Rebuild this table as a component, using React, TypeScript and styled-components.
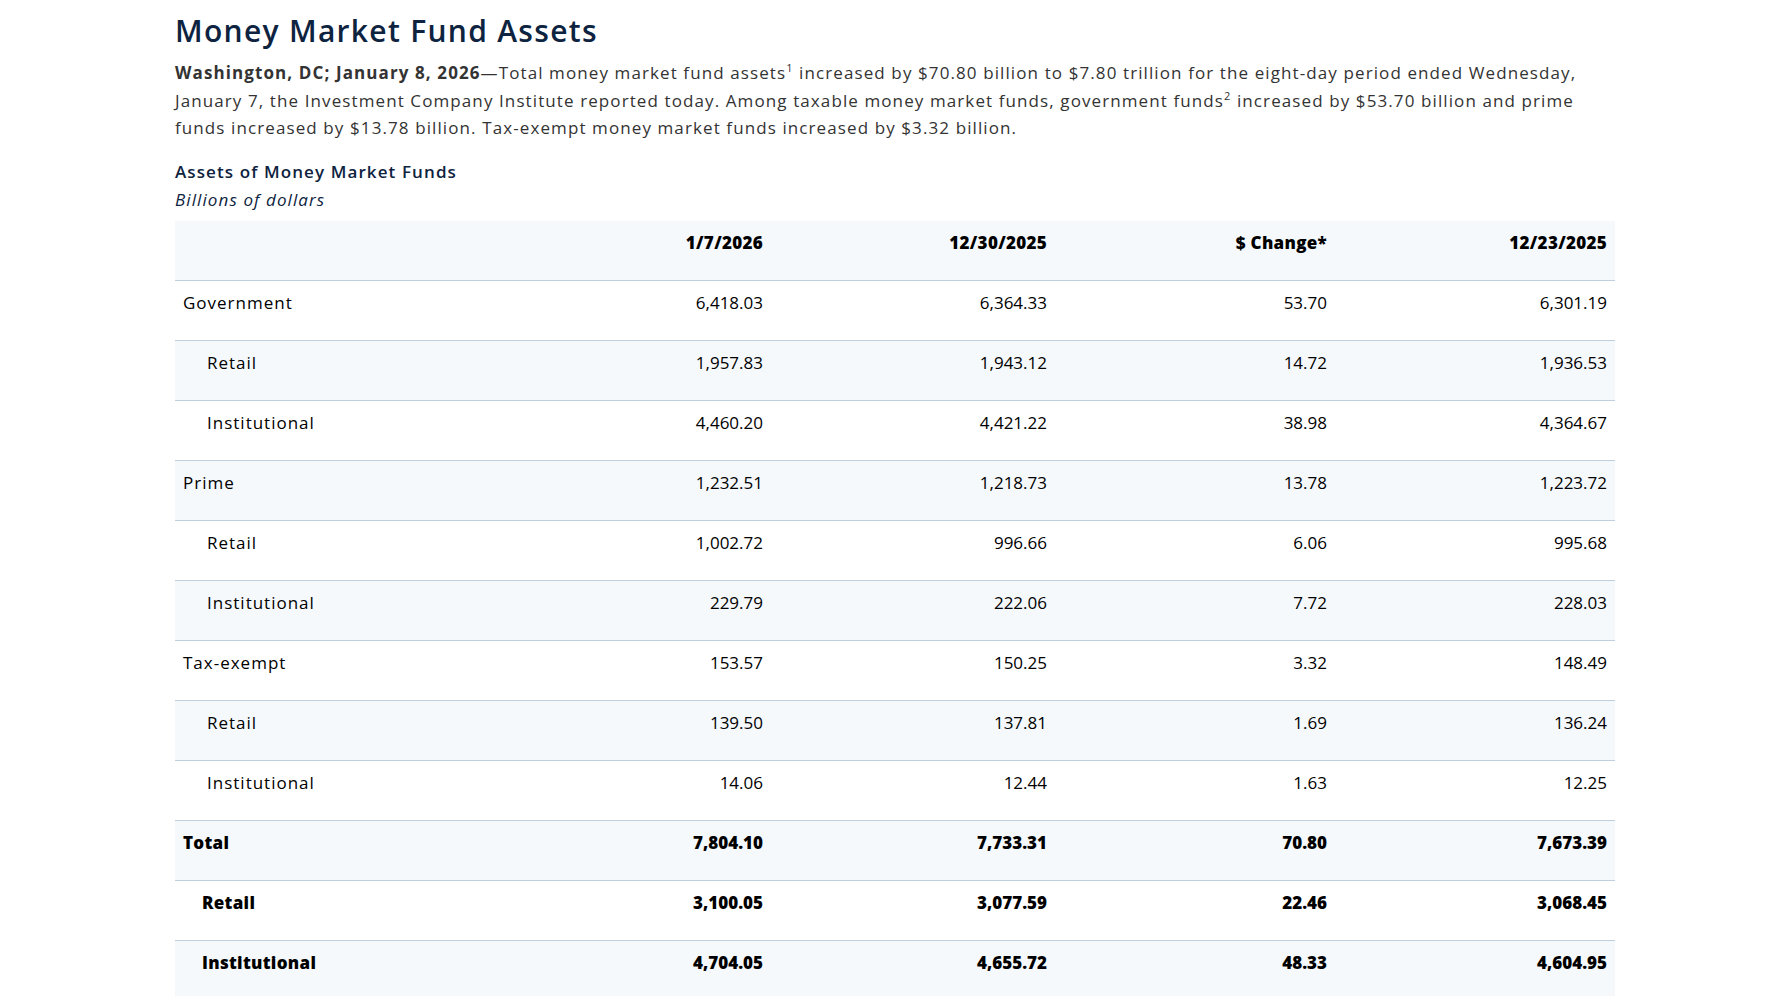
import styled, { createGlobalStyle } from 'styled-components';

interface FundRow {
  label: string;
  values: string[];
  level: 'group' | 'sub' | 'total' | 'totalSub';
}

const rows: FundRow[] = [
  { label: 'Government', values: ['6,418.03', '6,364.33', '53.70', '6,301.19'], level: 'group' },
  { label: 'Retail', values: ['1,957.83', '1,943.12', '14.72', '1,936.53'], level: 'sub' },
  { label: 'Institutional', values: ['4,460.20', '4,421.22', '38.98', '4,364.67'], level: 'sub' },
  { label: 'Prime', values: ['1,232.51', '1,218.73', '13.78', '1,223.72'], level: 'group' },
  { label: 'Retail', values: ['1,002.72', '996.66', '6.06', '995.68'], level: 'sub' },
  { label: 'Institutional', values: ['229.79', '222.06', '7.72', '228.03'], level: 'sub' },
  { label: 'Tax-exempt', values: ['153.57', '150.25', '3.32', '148.49'], level: 'group' },
  { label: 'Retail', values: ['139.50', '137.81', '1.69', '136.24'], level: 'sub' },
  { label: 'Institutional', values: ['14.06', '12.44', '1.63', '12.25'], level: 'sub' },
  { label: 'Total', values: ['7,804.10', '7,733.31', '70.80', '7,673.39'], level: 'total' },
  { label: 'Retail', values: ['3,100.05', '3,077.59', '22.46', '3,068.45'], level: 'totalSub' },
  { label: 'Institutional', values: ['4,704.05', '4,655.72', '48.33', '4,604.95'], level: 'totalSub' },
];

const columns = ['1/7/2026', '12/30/2025', '$ Change*', '12/23/2025'];
const colWidths = [316, 280, 284, 280, 280];

const GlobalStyle = createGlobalStyle`
  body {
    margin: 0;
    background: #ffffff;
    font-family: "Open Sans", "Liberation Sans", sans-serif;
    color: #333333;
  }
`;

const Page = styled.main`
  max-width: 1440px;
  margin: 0 auto;
  padding-top: 14px;
`;

const Title = styled.h1`
  margin: 0;
  font-size: 30px;
  line-height: 34px;
  font-weight: 600;
  letter-spacing: 1.3px;
  color: #0d2340;
`;

const Lead = styled.p`
  margin: 11px 0 0;
  font-size: 17px;
  line-height: 27.5px;
  letter-spacing: 1.1px;
  color: #333333;

  strong {
    font-weight: 700;
  }

  sup {
    font-size: 11px;
    line-height: 0;
    vertical-align: 7px;
  }
`;

const Caption = styled.div`
  margin-top: 16px;
  color: #0d2340;
  font-size: 17px;
  line-height: 28px;
  letter-spacing: 1.1px;
`;

const CaptionTitle = styled.div`
  font-weight: 600;
`;

const CaptionUnit = styled.div`
  font-style: italic;
`;

const Table = styled.table`
  width: 100%;
  margin-top: 7px;
  border-collapse: collapse;
  table-layout: fixed;
  color: #000000;
  font-size: 17px;
`;

const HeadRow = styled.tr`
  background: #f5f9fc;
`;

const HeadCell = styled.th`
  height: 60px;
  padding: 8px 8px 0;
  box-sizing: border-box;
  vertical-align: top;
  text-align: right;
  line-height: 27px;
  font-weight: 800;
  letter-spacing: 0.3px;
  border-bottom: 1px solid #bfcfdf;
`;

const BodyRow = styled.tr`
  &:nth-child(even) {
    background: #f5f9fc;
  }
`;

const Cell = styled.td<{ $bold: boolean }>`
  height: 60px;
  padding: 8px 8px 0;
  box-sizing: border-box;
  vertical-align: top;
  text-align: right;
  line-height: 27px;
  font-weight: ${({ $bold }) => ($bold ? 800 : 400)};
  border-bottom: 1px solid #bfcfdf;
`;

const LabelCell = styled(Cell)<{ $indent: number }>`
  text-align: left;
  padding-left: ${({ $indent }) => 8 + $indent}px;
  letter-spacing: ${({ $bold }) => ($bold ? '0.3px' : '1px')};
`;

const indentFor = (level: FundRow['level']) => {
  if (level === 'sub') return 24;
  if (level === 'totalSub') return 19;
  return 0;
};

const App = () => {
  return (
    <>
      <GlobalStyle />
      <Page>
        <Title>Money Market Fund Assets</Title>
        <Lead>
          <strong>Washington, DC; January 8, 2026</strong>—Total money market fund assets<sup>1</sup> increased by
          $70.80 billion to $7.80 trillion for the eight-day period ended Wednesday, January 7, the Investment Company
          Institute reported today. Among taxable money market funds, government funds<sup>2</sup> increased by $53.70
          billion and prime funds increased by $13.78 billion. Tax-exempt money market funds increased by $3.32 billion.
        </Lead>
        <Caption>
          <CaptionTitle>Assets of Money Market Funds</CaptionTitle>
          <CaptionUnit>Billions of dollars</CaptionUnit>
        </Caption>
        <Table>
          <colgroup>
            {colWidths.map((w, i) => (
              <col key={i} style={{ width: w }} />
            ))}
          </colgroup>
          <thead>
            <HeadRow>
              <HeadCell />
              {columns.map((c) => (
                <HeadCell key={c}>{c}</HeadCell>
              ))}
            </HeadRow>
          </thead>
          <tbody>
            {rows.map((row, i) => {
              const bold = row.level === 'total' || row.level === 'totalSub';
              return (
                <BodyRow key={i}>
                  <LabelCell $bold={bold} $indent={indentFor(row.level)}>
                    {row.label}
                  </LabelCell>
                  {row.values.map((v, j) => (
                    <Cell key={j} $bold={bold}>
                      {v}
                    </Cell>
                  ))}
                </BodyRow>
              );
            })}
          </tbody>
        </Table>
      </Page>
    </>
  );
};

export default App;
